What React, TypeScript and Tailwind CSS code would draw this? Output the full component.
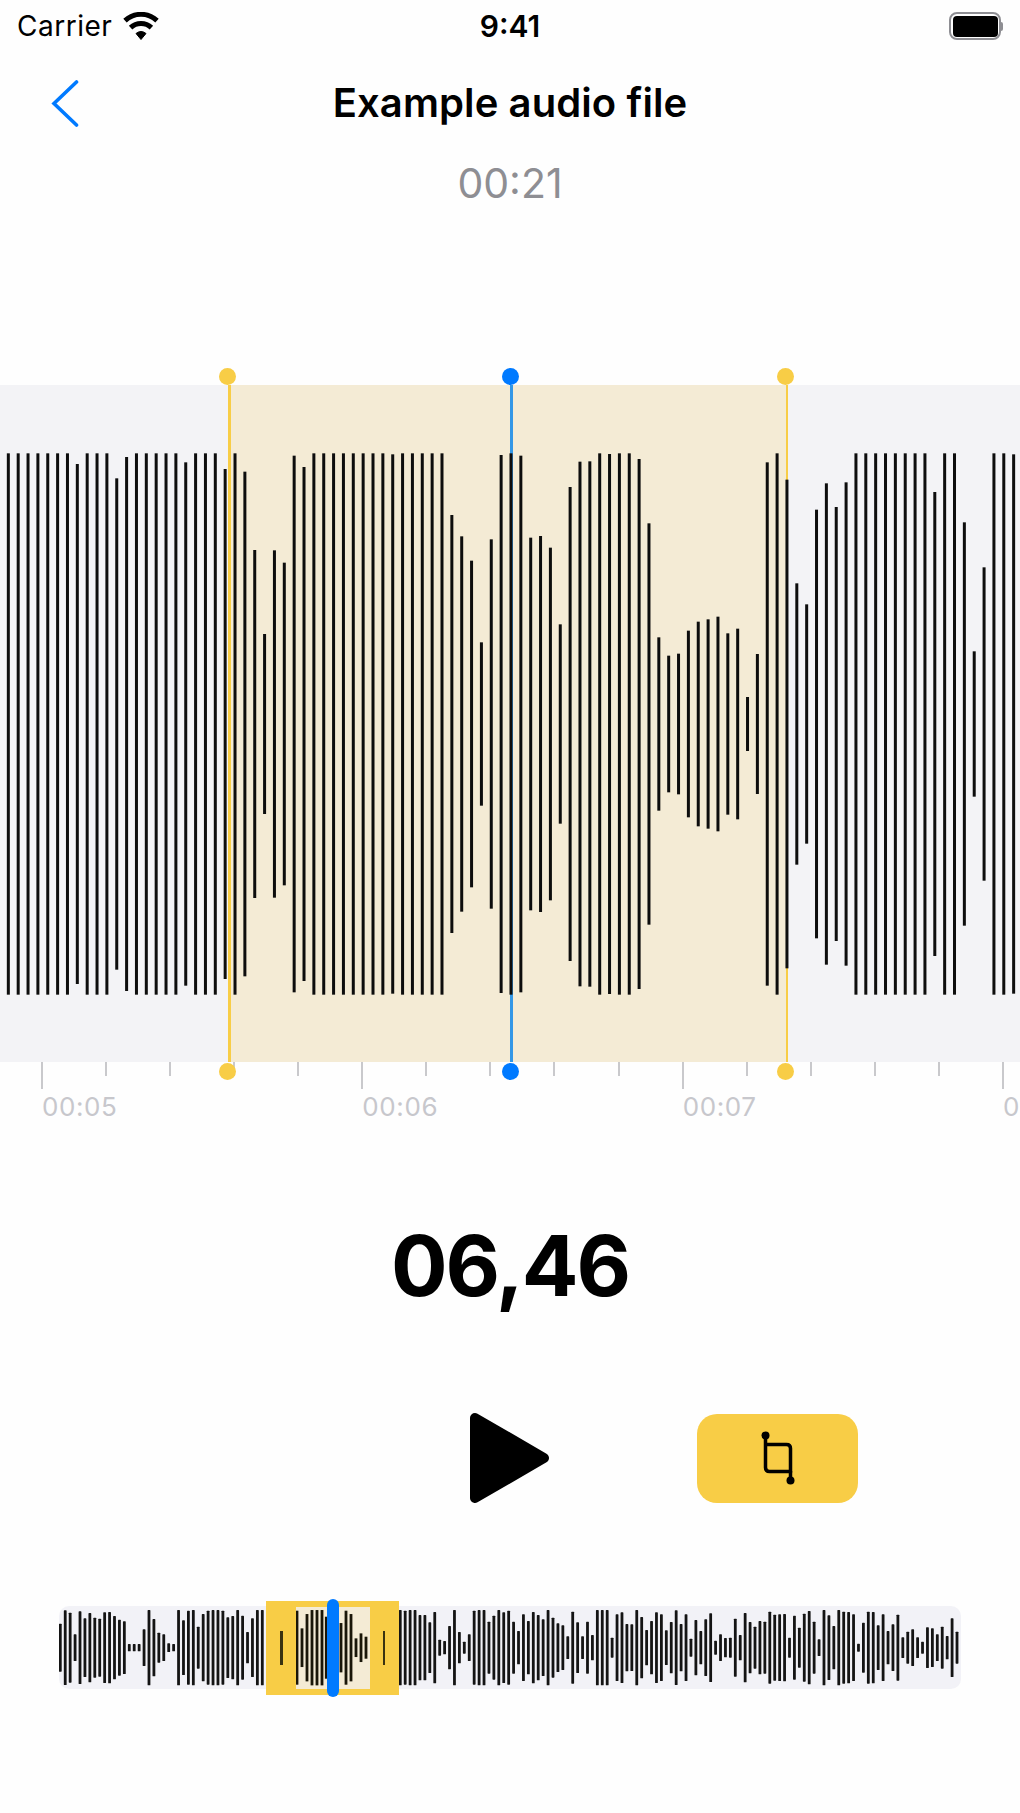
const FONT = "font-['Inter','Liberation_Sans',sans-serif]";

const BIG_TOPS = [
  280,280,280,280,280,280,280,312,280,280,
  280,355,291,280,280,280,280,280,307,280,
  280,280,327,280,335,570,822,571,608,287,
  321,280,280,280,280,280,280,280,280,283,
  280,280,280,280,280,465,529,602,847,538,
  285,
  280,287,533,528,563,793,381,305,304,280,
  282,280,280,297,490,832,887,881,812,785,
  778,770,820,806,1011,882,307,280,359,670,
  733,449,370,441,367,280,280,280,280,280,
  280,280,280,396,280,280,487,874,622,280,
  280,283,
];

const MINI: number[] = [
  72,112,105,40,109,88,104,90,87,106,107,95,84,79,11,11,11,55,113,86,45,40,13,11,
  113,82,111,113,63,101,111,113,113,111,91,95,113,96,47,88,113,113,
  0,0,0,0,0,0,
  0,0,0,0,0,0,0,0,0,0,0,0,0,0,0,
  0,0,0,0,0,0,
  113,111,113,113,98,98,76,107,24,20,65,113,47,18,40,111,113,113,78,96,113,106,111,
  78,50,100,80,107,98,85,113,90,73,67,34,108,76,34,78,38,113,113,113,30,100,106,71,70,
  113,92,53,80,106,100,52,77,112,71,100,27,83,50,85,103,21,40,29,30,87,38,104,77,63,80,78,
  108,99,100,101,30,96,60,102,110,78,25,113,97,65,113,108,107,100,12,75,108,107,67,100,50,70,
  99,31,48,55,31,18,61,58,40,63,35,88,48,
];

const WINDOW_BARS: [number, number][] = [
  [1, 111],[6, 58],[11, 101],[16, 113],[21, 113],[26, 113],[30.3, 93],
  [45, 74],[50, 111],[55, 101],[60, 28],[65, 43],[70, 33],
];

function BigWave() {
  return (
    <svg className="absolute inset-0" width="1020" height="677" viewBox="0 0 1020 677">
      {BIG_TOPS.map((z, i) => {
        const half = 364 - z / 3;
        return <rect key={i} x={8.33 + i * 9.856 - 1.5} y={339 - half} width="3" height={half * 2} fill="#0d0d0d" />;
      })}
    </svg>
  );
}

function MiniWave() {
  return (
    <svg className="absolute inset-0" width="902" height="83" viewBox="0 0 902 83">
      {MINI.map((h, i) => {
        if (!h) return null;
        const half = h / 3;
        return <rect key={i} x={1.3 + i * 4.927 - 1.4} y={41.7 - half} width="2.8" height={half * 2} rx="0.6" fill="#141414" />;
      })}
    </svg>
  );
}

function Wifi() {
  return (
    <svg width="36" height="28" viewBox="0 0 36 28" className="ml-[11px]">
      <path d="M18 27.5 L13 21.5 A8 8 0 0 1 23 21.5 Z" fill="#000" stroke="#000" strokeLinejoin="round" />
      <path d="M7.6 15.6 A15 15 0 0 1 28.4 15.6" fill="none" stroke="#000" strokeWidth="5" />
      <path d="M2 8.6 A23.5 23.5 0 0 1 34 8.6" fill="none" stroke="#000" strokeWidth="5" />
    </svg>
  );
}

function Battery() {
  return (
    <div className="flex items-center">
      <div className="w-[52px] h-[28px] rounded-[8px] border-2 border-[#8e8e93] p-[1.5px]">
        <div className="w-full h-full rounded-[4px] bg-black" />
      </div>
      <div className="w-[2px] h-[9px] bg-[#8e8e93] rounded-r-[2px]" />
    </div>
  );
}

function RulerCell({ label }: { label: string }) {
  return (
    <div className="w-[320.33px] shrink-0">
      <div className="flex h-[27px]">
        <div className="w-[64.06px] shrink-0"><div className="w-[2px] h-[27px] bg-[#c9c9cc]" /></div>
        {[0, 1, 2, 3].map((k) => (
          <div key={k} className="w-[64.06px] shrink-0"><div className="w-[2px] h-[14px] bg-[#c9c9cc]" /></div>
        ))}
      </div>
      <div className="pl-[1px] mt-[2px] text-[26px] leading-[32px] text-[#c7c7cc] tracking-[0.6px]">{label}</div>
    </div>
  );
}

function Dot({ cls }: { cls: string }) {
  return <div className={`absolute w-[17px] h-[17px] rounded-full ${cls}`} />;
}

export default function App() {
  return (
    <div className={`w-[1020px] h-[1813px] overflow-hidden bg-[#fefefe] text-black ${FONT}`}>
      {/* status bar */}
      <div className="relative h-[52px] flex items-center justify-between pl-[17px] pr-[17px]">
        <div className="flex items-center">
          <span className="text-[28px] leading-[32px] tracking-[0.5px]">Carrier</span>
          <Wifi />
        </div>
        <span className="absolute left-0 right-0 text-center text-[30px] leading-[32px] font-semibold">9:41</span>
        <Battery />
      </div>

      {/* nav */}
      <div className="relative h-[102px] flex items-center justify-center">
        <svg width="28" height="47" viewBox="0 0 28 47" className="absolute left-[51px] top-[28px]" fill="none">
          <path d="M25.5 2 L3 23.5 L25.5 45" stroke="#007aff" strokeWidth="3.6" strokeLinecap="round" strokeLinejoin="miter" />
        </svg>
        <h1 className="text-[40px] leading-[46px] font-semibold tracking-[0.1px]">Example audio file</h1>
      </div>
      <div className="text-center text-[41px] leading-[56px] text-[#8e8e93] h-[56px] mt-[1px]">00:21</div>

      {/* main waveform */}
      <div className="relative mt-[174px] h-[677px] bg-[#f3f3f6]">
        <div className="absolute top-0 bottom-0 left-[230px] w-[558px] bg-[#f4ebd5]" />
        <div className="absolute top-0 bottom-0 left-[228px] w-[2.5px] bg-[#f8cd46]" />
        <div className="absolute top-0 bottom-0 left-[785.5px] w-[2.5px] bg-[#f8cd46]" />
        <div className="absolute top-0 bottom-0 left-[510px] w-[2.5px] bg-[#3397e6]" />
        <BigWave />
        <Dot cls="left-[219px] -top-[17px] bg-[#f8cd46]" />
        <Dot cls="left-[776.5px] -top-[17px] bg-[#f8cd46]" />
        <Dot cls="left-[501.5px] -top-[17px] bg-[#007aff]" />
        <Dot cls="left-[219px] -bottom-[18px] bg-[#f8cd46] z-10" />
        <Dot cls="left-[776.5px] -bottom-[18px] bg-[#f8cd46] z-10" />
        <Dot cls="left-[501.5px] -bottom-[18px] bg-[#007aff] z-10" />
      </div>

      {/* ruler */}
      <div className="flex pl-[41px]">
        <RulerCell label="00:05" />
        <RulerCell label="00:06" />
        <RulerCell label="00:07" />
        <RulerCell label="00:08" />
      </div>

      {/* time */}
      <div className="mt-[101px] h-[84px] flex items-center justify-center text-[84px] leading-[84px] font-bold tracking-[-2px]">06,46</div>

      {/* controls */}
      <div className="relative mt-[105px] h-[90px] flex items-center">
        <svg width="82" height="92" viewBox="0 0 82 92" className="ml-[469px]">
          <path d="M6 6 L75 46 L6 86 Z" fill="#000" stroke="#000" strokeWidth="10" strokeLinejoin="round" />
        </svg>
        <div className="ml-[146px] w-[161px] h-[89px] rounded-[20px] bg-[#f8cd46] flex items-center justify-center">
          <svg width="40" height="60" viewBox="0 0 40 60" fill="none">
            <circle cx="7.5" cy="7.5" r="4" fill="#000" />
            <circle cx="32.5" cy="52.5" r="4" fill="#000" />
            <path d="M7.5 7.5 V39.5 Q7.5 43.5 11.5 43.5 H32.5 V52.5" stroke="#000" strokeWidth="3.5" strokeLinejoin="round" />
            <path d="M7.5 16.5 H28.5 Q32.5 16.5 32.5 20.5 V44.5" stroke="#000" strokeWidth="3.5" />
          </svg>
        </div>
      </div>

      {/* minimap */}
      <div className="relative mt-[103px] ml-[59px] w-[902px] h-[83px] rounded-[10px] bg-[#f2f2f7]">
        <MiniWave />
        <div className="absolute left-[207px] -top-[5px] w-[133px] h-[94px] bg-[#f8cd46] flex items-center justify-between px-[14px]">
          <div className="w-[2.5px] h-[34px] bg-[#3a3310]" />
          <div className="w-[2.5px] h-[34px] bg-[#3a3310]" />
        </div>
        <div className="absolute left-[237px] top-[1px] w-[74px] h-[82px] bg-[#f4ebd5]">
          <svg className="absolute left-0 top-0" width="74" height="82" viewBox="0 0 74 82">
            {WINDOW_BARS.map(([x, h], i) => (
              <rect key={i} x={x - 1.4} y={40.7 - h / 3} width="2.8" height={(2 * h) / 3} fill="#1a1608" />
            ))}
          </svg>
        </div>
        <div className="absolute left-[268px] -top-[7px] w-[12px] h-[98px] rounded-full bg-[#007aff]" />
      </div>
    </div>
  );
}
